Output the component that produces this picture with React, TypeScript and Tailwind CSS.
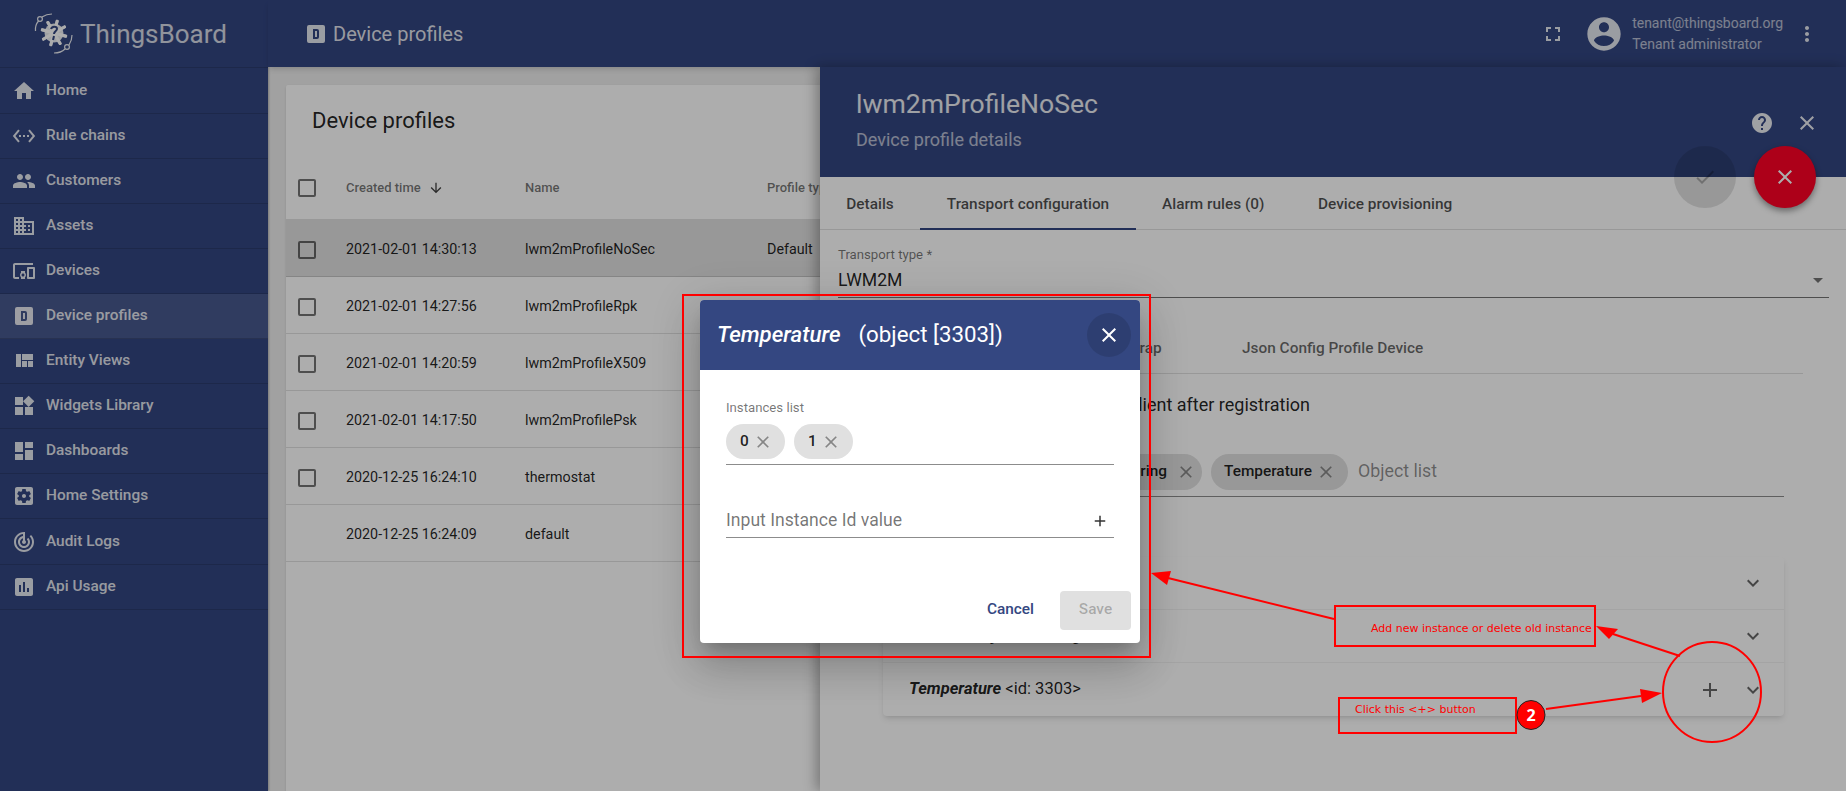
import React from 'react';

const P = {
  home: 'M10 20v-6h4v6h5v-8h3L12 3 2 12h3v8z',
  ethernet: 'M7.77 6.76L6.23 5.48.82 12l5.41 6.52 1.54-1.28L3.42 12l4.35-5.24zM7 13h2v-2H7v2zm10-2h-2v2h2v-2zm-6 2h2v-2h-2v2zm6.77-7.52l-1.54 1.28L20.58 12l-4.35 5.24 1.54 1.28L23.18 12l-5.41-6.52z',
  people: 'M16 11c1.66 0 2.99-1.34 2.99-3S17.66 5 16 5c-1.66 0-3 1.34-3 3s1.34 3 3 3zm-8 0c1.66 0 2.99-1.34 2.99-3S9.66 5 8 5C6.34 5 5 6.34 5 8s1.34 3 3 3zm0 2c-2.33 0-7 1.17-7 3.5V19h14v-2.5c0-2.33-4.67-3.5-7-3.5zm8 0c-.29 0-.62.02-.97.05 1.16.84 1.97 1.97 1.97 3.45V19h6v-2.5c0-2.33-4.67-3.5-7-3.5z',
  domain: 'M12 7V3H2v18h20V7H12zM6 19H4v-2h2v2zm0-4H4v-2h2v2zm0-4H4V9h2v2zm0-4H4V5h2v2zm4 12H8v-2h2v2zm0-4H8v-2h2v2zm0-4H8V9h2v2zm0-4H8V5h2v2zm10 12h-8v-2h2v-2h-2v-2h2v-2h-2V9h8v10zm-2-8h-2v2h2v-2zm0 4h-2v2h2v-2z',
  devices: 'M3 6h18V4H3c-1.1 0-2 .9-2 2v12c0 1.1.9 2 2 2h4v-2H3V6zm10 6H9v1.78c-.61.55-1 1.33-1 2.22s.39 1.67 1 2.22V20h4v-1.78c.61-.55 1-1.34 1-2.22s-.39-1.67-1-2.22V12zm-2 5.5c-.83 0-1.5-.67-1.5-1.5s.67-1.5 1.5-1.5 1.5.67 1.5 1.5-.67 1.5-1.5 1.5zM22 8h-6c-.5 0-1 .5-1 1v10c0 .5.5 1 1 1h6c.5 0 1-.5 1-1V9c0-.5-.5-1-1-1zm-1 10h-4v-8h4v8z',
  dbox: 'M9,7V17H13A2,2 0 0,0 15,15V9A2,2 0 0,0 13,7H9M11,9H13V15H11V9M5,3H19A2,2 0 0,1 21,5V19A2,2 0 0,1 19,21H5A2,2 0 0,1 3,19V5A2,2 0 0,1 5,3Z',
  quilt: 'M10 18h5v-6h-5v6zm-6 0h5V5H4v13zm12 0h5v-6h-5v6zM10 5v6h11V5H10z',
  widgets: 'M13 13v8h8v-8h-8zM3 21h8v-8H3v8zM3 3v8h8V3H3zm13.66-1.31L11 7.34 16.66 13l5.66-5.66-5.66-5.65z',
  dashboard: 'M3 13h8V3H3v10zm0 8h8v-6H3v6zm10 0h8V11h-8v10zm0-18v6h8V3h-8z',
  settings: 'M12 10c-1.1 0-2 .9-2 2s.9 2 2 2 2-.9 2-2-.9-2-2-2zm7-7H5c-1.11 0-2 .9-2 2v14c0 1.1.89 2 2 2h14c1.11 0 2-.9 2-2V5c0-1.1-.89-2-2-2zm-1.75 9c0 .23-.02.46-.05.68l1.48 1.16c.13.11.17.3.08.45l-1.4 2.42c-.09.15-.27.21-.43.15l-1.74-.7c-.36.28-.76.51-1.18.69l-.26 1.85c-.03.17-.18.3-.35.3h-2.8c-.17 0-.32-.13-.35-.29l-.26-1.85c-.43-.18-.82-.41-1.18-.69l-1.74.7c-.16.06-.34 0-.43-.15l-1.4-2.42c-.09-.15-.05-.34.08-.45l1.48-1.16c-.03-.23-.05-.46-.05-.69 0-.23.02-.46.05-.68l-1.48-1.16c-.13-.11-.17-.3-.08-.45l1.4-2.42c.09-.15.27-.21.43-.15l1.74.7c.36-.28.76-.51 1.18-.69l.26-1.85c.03-.17.18-.3.35-.3h2.8c.17 0 .32.13.35.29l.26 1.85c.43.18.82.41 1.18.69l1.74-.7c.16-.06.34 0 .43.15l1.4 2.42c.09.15.05.34-.08.45l-1.48 1.16c.03.23.05.46.05.69z',
  track: 'M19.07 4.93l-1.41 1.41C19.1 7.79 20 9.79 20 12c0 4.42-3.58 8-8 8s-8-3.58-8-8c0-4.08 3.05-7.44 7-7.93v2.02C8.16 6.57 6 9.03 6 12c0 3.31 2.69 6 6 6s6-2.69 6-6c0-1.66-.67-3.16-1.76-4.24l-1.41 1.41C15.55 9.9 16 10.9 16 12c0 2.21-1.79 4-4 4s-4-1.79-4-4c0-1.86 1.28-3.41 3-3.86v2.14c-.6.35-1 .98-1 1.72 0 1.1.9 2 2 2s2-.9 2-2c0-.74-.4-1.38-1-1.72V2h-1C6.48 2 2 6.48 2 12s4.48 10 10 10 10-4.48 10-10c0-2.76-1.12-5.26-2.93-7.07z',
  chart: 'M19 3H5c-1.1 0-2 .9-2 2v14c0 1.1.9 2 2 2h14c1.1 0 2-.9 2-2V5c0-1.1-.9-2-2-2zM9 17H7v-7h2v7zm4 0h-2V7h2v10zm4 0h-2v-4h2v4z',
  fullscreen: 'M7 14H5v5h5v-2H7v-3zm-2-4h2V7h3V5H5v5zm12 7h-3v2h5v-5h-2v3zM14 5v2h3v3h2V5h-5z',
  account: 'M12 2C6.48 2 2 6.48 2 12s4.48 10 10 10 10-4.48 10-10S17.52 2 12 2zm0 3c1.66 0 3 1.34 3 3s-1.34 3-3 3-3-1.34-3-3 1.34-3 3-3zm0 14.2c-2.5 0-4.71-1.28-6-3.22.03-1.99 4-3.08 6-3.08 1.99 0 5.97 1.09 6 3.08-1.29 1.94-3.5 3.22-6 3.22z',
  more: 'M12 8c1.1 0 2-.9 2-2s-.9-2-2-2-2 .9-2 2 .9 2 2 2zm0 2c-1.1 0-2 .9-2 2s.9 2 2 2 2-.9 2-2-.9-2-2-2zm0 6c-1.1 0-2 .9-2 2s.9 2 2 2 2-.9 2-2-.9-2-2-2z',
  help: 'M12 2C6.48 2 2 6.48 2 12s4.48 10 10 10 10-4.48 10-10S17.52 2 12 2zm1 17h-2v-2h2v2zm2.07-7.75l-.9.92C13.45 12.9 13 13.5 13 15h-2v-.5c0-1.1.45-2.1 1.17-2.83l1.24-1.26c.37-.36.59-.86.59-1.41 0-1.1-.9-2-2-2s-2 .9-2 2H8c0-2.21 1.79-4 4-4s4 1.79 4 4c0 .88-.36 1.68-.93 2.25z',
  close: 'M19 6.41L17.59 5 12 10.59 6.41 5 5 6.41 10.59 12 5 17.59 6.41 19 12 13.41 17.59 19 19 17.59 13.41 12z',
  check: 'M9 16.17L4.83 12l-1.42 1.41L9 19 21 7l-1.41-1.41z',
  add: 'M19 13h-6v6h-2v-6H5v-2h6V5h2v6h6v2z',
  expand: 'M16.59 8.59L12 13.17 7.41 8.59 6 10l6 6 6-6z',
  down: 'M20 12l-1.41-1.41L13 16.17V4h-2v12.17l-5.58-5.59L4 12l8 8 8-8z',
};

const Icon = ({ d, className = 'w-6 h-6' }: { d: string; className?: string }) => (
  <svg viewBox="0 0 24 24" fill="currentColor" className={`shrink-0 ${className}`}>
    <path d={d} />
  </svg>
);

const menu = [
  { label: 'Home', icon: P.home, h: 'h-[46px]' },
  { label: 'Rule chains', icon: P.ethernet, h: 'h-[45px]' },
  { label: 'Customers', icon: P.people, h: 'h-[45px]' },
  { label: 'Assets', icon: P.domain, h: 'h-[45px]' },
  { label: 'Devices', icon: P.devices, h: 'h-[45px]' },
  { label: 'Device profiles', icon: P.dbox, h: 'h-[45px]', active: true },
  { label: 'Entity Views', icon: P.quilt, h: 'h-[45px]' },
  { label: 'Widgets Library', icon: P.widgets, h: 'h-[45px]' },
  { label: 'Dashboards', icon: P.dashboard, h: 'h-[45px]' },
  { label: 'Home Settings', icon: P.settings, h: 'h-[45px]' },
  { label: 'Audit Logs', icon: P.track, h: 'h-[46px]' },
  { label: 'Api Usage', icon: P.chart, h: 'h-[45px]' },
];

const rows = [
  { time: '2021-02-01 14:30:13', name: 'lwm2mProfileNoSec', type: 'Default', selected: true, box: true },
  { time: '2021-02-01 14:27:56', name: 'lwm2mProfileRpk', box: true },
  { time: '2021-02-01 14:20:59', name: 'lwm2mProfileX509', box: true },
  { time: '2021-02-01 14:17:50', name: 'lwm2mProfilePsk', box: true },
  { time: '2020-12-25 16:24:10', name: 'thermostat', box: true },
  { time: '2020-12-25 16:24:09', name: 'default' },
];

const Logo = () => (
  <svg viewBox="0 0 44 44" className="w-[44px] h-[44px] shrink-0 text-white/90">
    <g fill="currentColor">
      <circle cx="21" cy="21" r="9.500" />
      {[0, 45, 90, 135, 180, 225, 270, 315].map((a) => (
        <rect key={a} x="19.500" y="7.500" width="3" height="27" rx="1" transform={`rotate(${a + 15} 21 21)`} />
      ))}
    </g>
    <path d="M18 17c1-3 6-3 6 0 0 2-3 2-3 5M21 24l-1 4" fill="none" stroke="#334681" strokeWidth="2" />
    <g fill="none" stroke="currentColor" strokeWidth="1.200">
      <circle cx="7" cy="7" r="2.400" />
      <circle cx="34" cy="35" r="2.400" />
      <path d="M9 5c3-2 7-3 10-3M5.500 9C3 12 2 15 2.500 19M36 33c2-3 3-6 3-10M32 37c-3 3-7 4-11 4" />
    </g>
  </svg>
);

const Checkbox = () => <div className="w-[18px] h-[18px] rounded-[2px] border-2 border-black/55" />;

const Chip = ({ label, className }: { label: string; className: string }) => (
  <div className={`flex items-center justify-between rounded-full bg-[#e0e0e0] text-[15.400px] font-medium text-black/87 ${className}`}>
    <span>{label}</span>
    <Icon d={P.close} className="w-5 h-5 text-black/40" />
  </div>
);

const Sidebar = () => (
  <aside className="w-[268px] shrink-0 bg-[#334681] text-white/87 flex flex-col shadow-[1px_0_2px_rgba(0,0,0,.25)]">
    <div className="h-[68px] shrink-0 flex items-center pl-[33px] gap-[3px] border-b border-black/15">
      <Logo />
      <span className="text-[26px] leading-none text-white/80">ThingsBoard</span>
    </div>
    {menu.map((m) => (
      <div key={m.label} className={`${m.h} shrink-0 flex items-center pl-3 gap-[10px] border-b border-black/15 text-[15.400px] font-medium ${m.active ? 'bg-white/10' : ''}`}>
        <Icon d={m.icon} />
        <span>{m.label}</span>
      </div>
    ))}
  </aside>
);

const TopBar = () => (
  <header className="h-[67px] shrink-0 bg-[#334681] text-white/87 flex items-center shadow-md pl-[36px] pr-[27px] relative">
    <Icon d={P.dbox} className="w-6 h-6" />
    <span className="ml-[5px] text-xl">Device profiles</span>
    <div className="ml-auto flex items-center">
      <Icon d={P.fullscreen} />
      <Icon d={P.account} className="w-10 h-10 ml-[19px]" />
      <div className="ml-[8px] flex flex-col gap-[3px] text-sm leading-[18px] text-white/65">
        <span>tenant@thingsboard.org</span>
        <span>Tenant administrator</span>
      </div>
      <Icon d={P.more} className="ml-[12px] w-6 h-6" />
    </div>
  </header>
);

const ProfilesCard = () => (
  <div className="bg-white rounded-[2px] shadow h-[760px] text-[14.300px] text-black/87">
    <div className="h-[85px] pl-[26px] pb-[14px] flex items-center text-[22px]">Device profiles</div>
    <div className="h-[50px] pb-[14px] flex items-center border-b border-black/12 text-[13px] font-medium text-black/55">
      <div className="w-[60px] pl-[12px]"><Checkbox /></div>
      <div className="w-[179px] flex items-center gap-[7px]">
        Created time
        <Icon d={P.down} className="w-4 h-4 text-black/75" />
      </div>
      <div className="w-[242px]">Name</div>
      <div>Profile type</div>
    </div>
    {rows.map((r) => (
      <div key={r.time} className={`h-[57px] pt-1 flex items-center border-b border-black/12 ${r.selected ? 'bg-[#e0e0e0]' : ''}`}>
        <div className="w-[60px] pl-[12px]">{r.box && <Checkbox />}</div>
        <div className="w-[179px]">{r.time}</div>
        <div className="w-[242px]">{r.name}</div>
        <div>{r.type}</div>
      </div>
    ))}
  </div>
);

const Accordion = ({ children, last }: { children: React.ReactNode; last?: boolean }) => (
  <div className={`h-[53px] flex items-center pl-[26px] pr-[19px] text-[16.500px] text-black/87 ${last ? '' : 'border-b border-black/5'}`}>
    {children}
  </div>
);

const Drawer = () => (
  <div className="absolute left-[820px] right-0 top-[67px] bottom-0 bg-white shadow-[-4px_0_12px_rgba(0,0,0,.3)] text-black/87">
    <div className="h-[110px] bg-[#334681] flex text-white/90">
      <div className="pl-[36px] pt-[20px]">
        <div className="text-[26.600px] leading-[34px]">lwm2mProfileNoSec</div>
        <div className="mt-[9px] text-[18px] leading-5 text-white/65">Device profile details</div>
      </div>
      <div className="ml-auto pt-[44px] pr-[27px] flex gap-[21px]">
        <Icon d={P.help} />
        <Icon d={P.close} />
      </div>
    </div>

    <div className="h-[53px] pt-[3px] flex items-center border-b border-black/12 text-[15.400px] font-medium text-black/70">
      <div className="h-full w-[100px] flex items-center justify-center">Details</div>
      <div className="relative h-full w-[216px] flex items-center justify-center">
        Transport configuration
        <div className="absolute left-0 right-0 bottom-[-1px] h-[2px] bg-[#334681]" />
      </div>
      <div className="h-full pl-[26px] w-[156px] flex items-center">Alarm rules (0)</div>
      <div className="h-full pl-[26px] flex items-center">Device provisioning</div>
    </div>

    <div className="pl-[18px] pr-[17px]">
      <div className="pt-[18px] border-b border-black/55 h-[68px]">
        <div className="text-[13.200px] leading-[14px] text-black/55">Transport type *</div>
        <div className="flex items-center justify-between mt-[6px] text-[17.600px] leading-[24px] pr-[6px]">
          LWM2M
          <svg viewBox="0 0 10 5" className="w-[10px] h-[5px] text-black/55" fill="currentColor"><path d="M0 0h10L5 5z" /></svg>
        </div>
      </div>

      <div className="mt-[26px] w-[965px] h-[50px] flex items-center border-b border-black/12 text-[15.400px] font-medium text-black/60">
        <div className="w-[203px]" />
        <div className="w-[174px] text-center">Bootstrap</div>
        <div className="px-[27px]">Json Config Profile Device</div>
      </div>

      <div className="w-[472px] mt-[18px] h-6 flex justify-end items-center text-[18px] whitespace-nowrap">Observe client after registration</div>

      <div className="mt-[35px] w-[946px] h-[46px] pb-[4px] flex items-center gap-[9px] border-b border-black/45">
        <div className="w-[364px] flex justify-end">
          <Chip label="Connectivity Monitoring" className="h-9 pl-[13px] pr-[6px] gap-[9px] whitespace-nowrap" />
        </div>
        <Chip label="Temperature" className="h-9 w-[137px] pl-[13px] pr-[12px]" />
        <span className="text-[17.800px] text-black/45 ml-px">Object list</span>
      </div>

      <div className="mt-[60px] ml-[45px] w-[901px] bg-white rounded-[4px] shadow-md">
        <Accordion><Icon d={P.expand} className="ml-auto w-6 h-6 text-black/60" /></Accordion>
        <Accordion><b className="font-bold italic">Connectivity Monitoring</b>&nbsp;&lt;id: 4&gt;<Icon d={P.expand} className="ml-auto w-6 h-6 text-black/60" /></Accordion>
        <Accordion last>
          <span className="font-bold italic">Temperature</span>&nbsp;&lt;id: 3303&gt;
          <Icon d={P.add} className="ml-auto w-6 h-6 text-black/60" />
          <Icon d={P.expand} className="ml-[19px] w-6 h-6 text-black/60" />
        </Accordion>
      </div>
    </div>
  </div>
);

const Fabs = () => (
  <>
    <div className="absolute left-[1674px] top-[146px] w-[62px] h-[62px] rounded-full bg-black/12 flex items-center justify-center text-black/26">
      <Icon d={P.check} />
    </div>
    <div className="absolute left-[1754px] top-[146px] w-[62px] h-[62px] rounded-full bg-[#ff0026] text-white flex items-center justify-center shadow-[0_3px_6px_rgba(0,0,0,.4)]">
      <Icon d={P.close} />
    </div>
  </>
);

const Dialog = () => (
  <div className="absolute left-[700px] top-[300px] w-[440px] h-[343px] flex flex-col bg-white rounded-[4px] overflow-hidden shadow-[0_11px_15px_-7px_rgba(0,0,0,.2),0_24px_38px_3px_rgba(0,0,0,.14),0_9px_46px_8px_rgba(0,0,0,.12)]">
    <div className="h-[70px] shrink-0 bg-[#344781] text-white flex items-center pl-[17px] pr-[9px]">
      <span className="text-[22.300px] font-medium italic">Temperature</span>
      <span className="ml-[18px] text-[22.300px]">(object [3303])</span>
      <div className="ml-auto w-11 h-11 rounded-full bg-black/12 flex items-center justify-center">
        <Icon d={P.close} />
      </div>
    </div>
    <div className="flex-1 px-[26px] pt-[30px]">
      <div className="h-[65px] border-b border-black/45">
        <div className="text-[13.200px] leading-[16px] text-black/55">Instances list</div>
        <div className="mt-[8px] flex gap-[9px]">
          <Chip label="0" className="h-[35px] w-[59px] pl-[14px] pr-[12px]" />
          <Chip label="1" className="h-[35px] w-[59px] pl-[14px] pr-[12px]" />
        </div>
      </div>
      <div className="mt-[41px] h-[32px] flex items-center justify-between border-b border-black/45 pr-[5px] pb-[2px]">
        <span className="text-[17.600px] text-black/55">Input Instance Id value</span>
        <Icon d={P.add} className="w-[18px] h-[18px] text-black/80" />
      </div>
    </div>
    <div className="h-[48px] shrink-0 mb-[9px] pr-[9px] flex items-center justify-end text-[15.400px] font-medium">
      <span className="text-[#344781]">Cancel</span>
      <div className="ml-[26px] w-[71px] h-[39px] rounded-[4px] bg-[#e0e0e0] text-black/26 flex items-center justify-center">Save</div>
    </div>
  </div>
);

const Annotations = () => (
  <>
    <svg viewBox="0 0 1846 791" className="absolute inset-0 w-[1846px] h-[791px] pointer-events-none">
      <g fill="none" stroke="#ff0000" strokeWidth="2">
        <rect x="683" y="295" width="467" height="362" />
        <rect x="1335" y="606" width="260" height="40" />
        <rect x="1339" y="698" width="177" height="35" />
        <ellipse cx="1712" cy="692" rx="49" ry="50" />
        <path d="M1334 619L1168 578" />
        <path d="M1680 656L1613 634" />
        <path d="M1546 709L1641 696" />
      </g>
      <g fill="#ff0000">
        <polygon points="1151,573 1171,571 1167,585" />
        <polygon points="1596,626 1618,629 1609,639" />
        <polygon points="1662,693 1640,689 1642,703" />
      </g>
      <ellipse cx="1531" cy="715" rx="14" ry="14.500" fill="#ff0000" stroke="#222" strokeWidth="1" />
    </svg>
    <span className="absolute left-[1371px] top-[622px] text-[11px] leading-[14px] text-[#ff0000] font-['DejaVu_Sans',sans-serif] whitespace-nowrap">Add new instance or delete old instance</span>
    <span className="absolute left-[1355px] top-[703px] text-[11px] leading-[14px] text-[#ff0000] font-['DejaVu_Sans',sans-serif] whitespace-nowrap">Click this &lt;+&gt; button</span>
    <span className="absolute left-[1517px] top-[701px] w-[28px] h-[28px] flex items-center justify-center text-[16px] font-bold text-white font-['Open_Sans',sans-serif]">2</span>
  </>
);

export default function App() {
  return (
    <div className="relative w-[1846px] h-[791px] overflow-hidden flex bg-[#eeeeee] font-['Roboto',sans-serif]">
      <Sidebar />
      <main className="flex-1 min-w-0 flex flex-col">
        <TopBar />
        <div className="pt-[18px] pl-[18px] pr-[18px]">
          <ProfilesCard />
        </div>
      </main>
      <Drawer />
      <Fabs />
      <div className="absolute inset-0 bg-black/32" />
      <Dialog />
      <Annotations />
    </div>
  );
}
